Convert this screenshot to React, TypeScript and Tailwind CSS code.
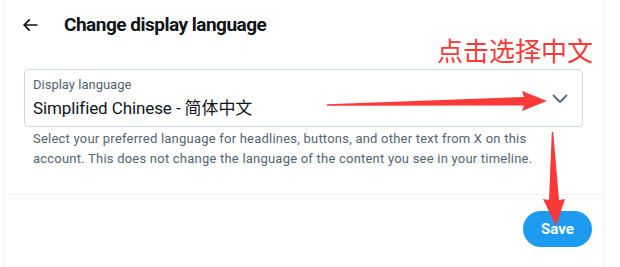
import React from 'react'

const font = { fontFamily: 'Roboto, "Noto Sans CJK SC", sans-serif' }

function BackArrow() {
  return (
    <svg viewBox="0 0 24 24" className="w-5 h-5 fill-[#0f1419]">
      <path d="M7.414 13l5.043 5.04-1.414 1.42L3.586 12l7.457-7.46 1.414 1.42L7.414 11H21v2H7.414z" />
    </svg>
  )
}

function Chevron() {
  return (
    <svg viewBox="0 0 16 9" className="w-4 h-[9px]" fill="none">
      <path d="M1 1l7 7 7-7" stroke="#536471" strokeWidth="1.8" />
    </svg>
  )
}

export default function App() {
  return (
    <div className="relative w-[620px] h-[267px] bg-white overflow-hidden" style={font}>
      {/* Panel */}
      <div className="ml-[3px] w-[601px] h-full border-x border-[#eff3f4] flex flex-col">
        {/* Header */}
        <div className="h-[49px] flex items-center pl-[16px]">
          <BackArrow />
          <h1 className="ml-[24px] mt-[2px] text-[19px] font-bold text-[#0f1419] tracking-[-0.5px]">
            Change display language
          </h1>
        </div>

        {/* Select */}
        <div className="px-[20px] mt-[20px]">
          <div className="h-[58px] rounded-[4px] border border-[#cfd9de] flex items-center pl-[8px] pr-[14px]">
            <div className="flex-1 flex flex-col">
              <span className="text-[13px] leading-[16px] text-[#536471]">Display language</span>
              <span className="text-[17px] leading-[24px] text-[#0f1419] mt-[3px] tracking-[-0.1px]">
                Simplified Chinese - 简体中文
              </span>
            </div>
            <Chevron />
          </div>
          <p className="pl-[9px] text-[13px] leading-[20px] text-[#536471] mt-[2px] tracking-[0.22px]">
            Select your preferred language for headlines, buttons, and other text from X on this
            <br />
            account. This does not change the language of the content you see in your timeline.
          </p>
        </div>

        {/* Footer */}
        <div className="mt-[25px] border-t border-[#eff3f4] flex justify-end pr-[11px] pt-[16px]">
          <button className="w-[69px] h-[36px] rounded-full bg-[#1d9bf0] text-white text-[15px] font-bold">
            Save
          </button>
        </div>
      </div>

      {/* Annotations */}
      <div
        className="absolute left-[437px] top-[33px] text-[26px] leading-[34px] text-[#f93a3a]"
        style={{ fontFamily: '"Noto Sans CJK SC", sans-serif' }}
      >
        点击选择中文
      </div>
      <svg className="absolute left-0 top-0" width="620" height="267" viewBox="0 0 620 267">
        <polygon
          points="327,104.3 524,97 522,91 547,101 522,111 524,105.5 327,105.7"
          fill="#fb3939"
        />
        <polygon
          points="551.8,132 549,200 543,199 556,226 565,199 559,200 553.2,132"
          fill="#fb3939"
        />
      </svg>
    </div>
  )
}
